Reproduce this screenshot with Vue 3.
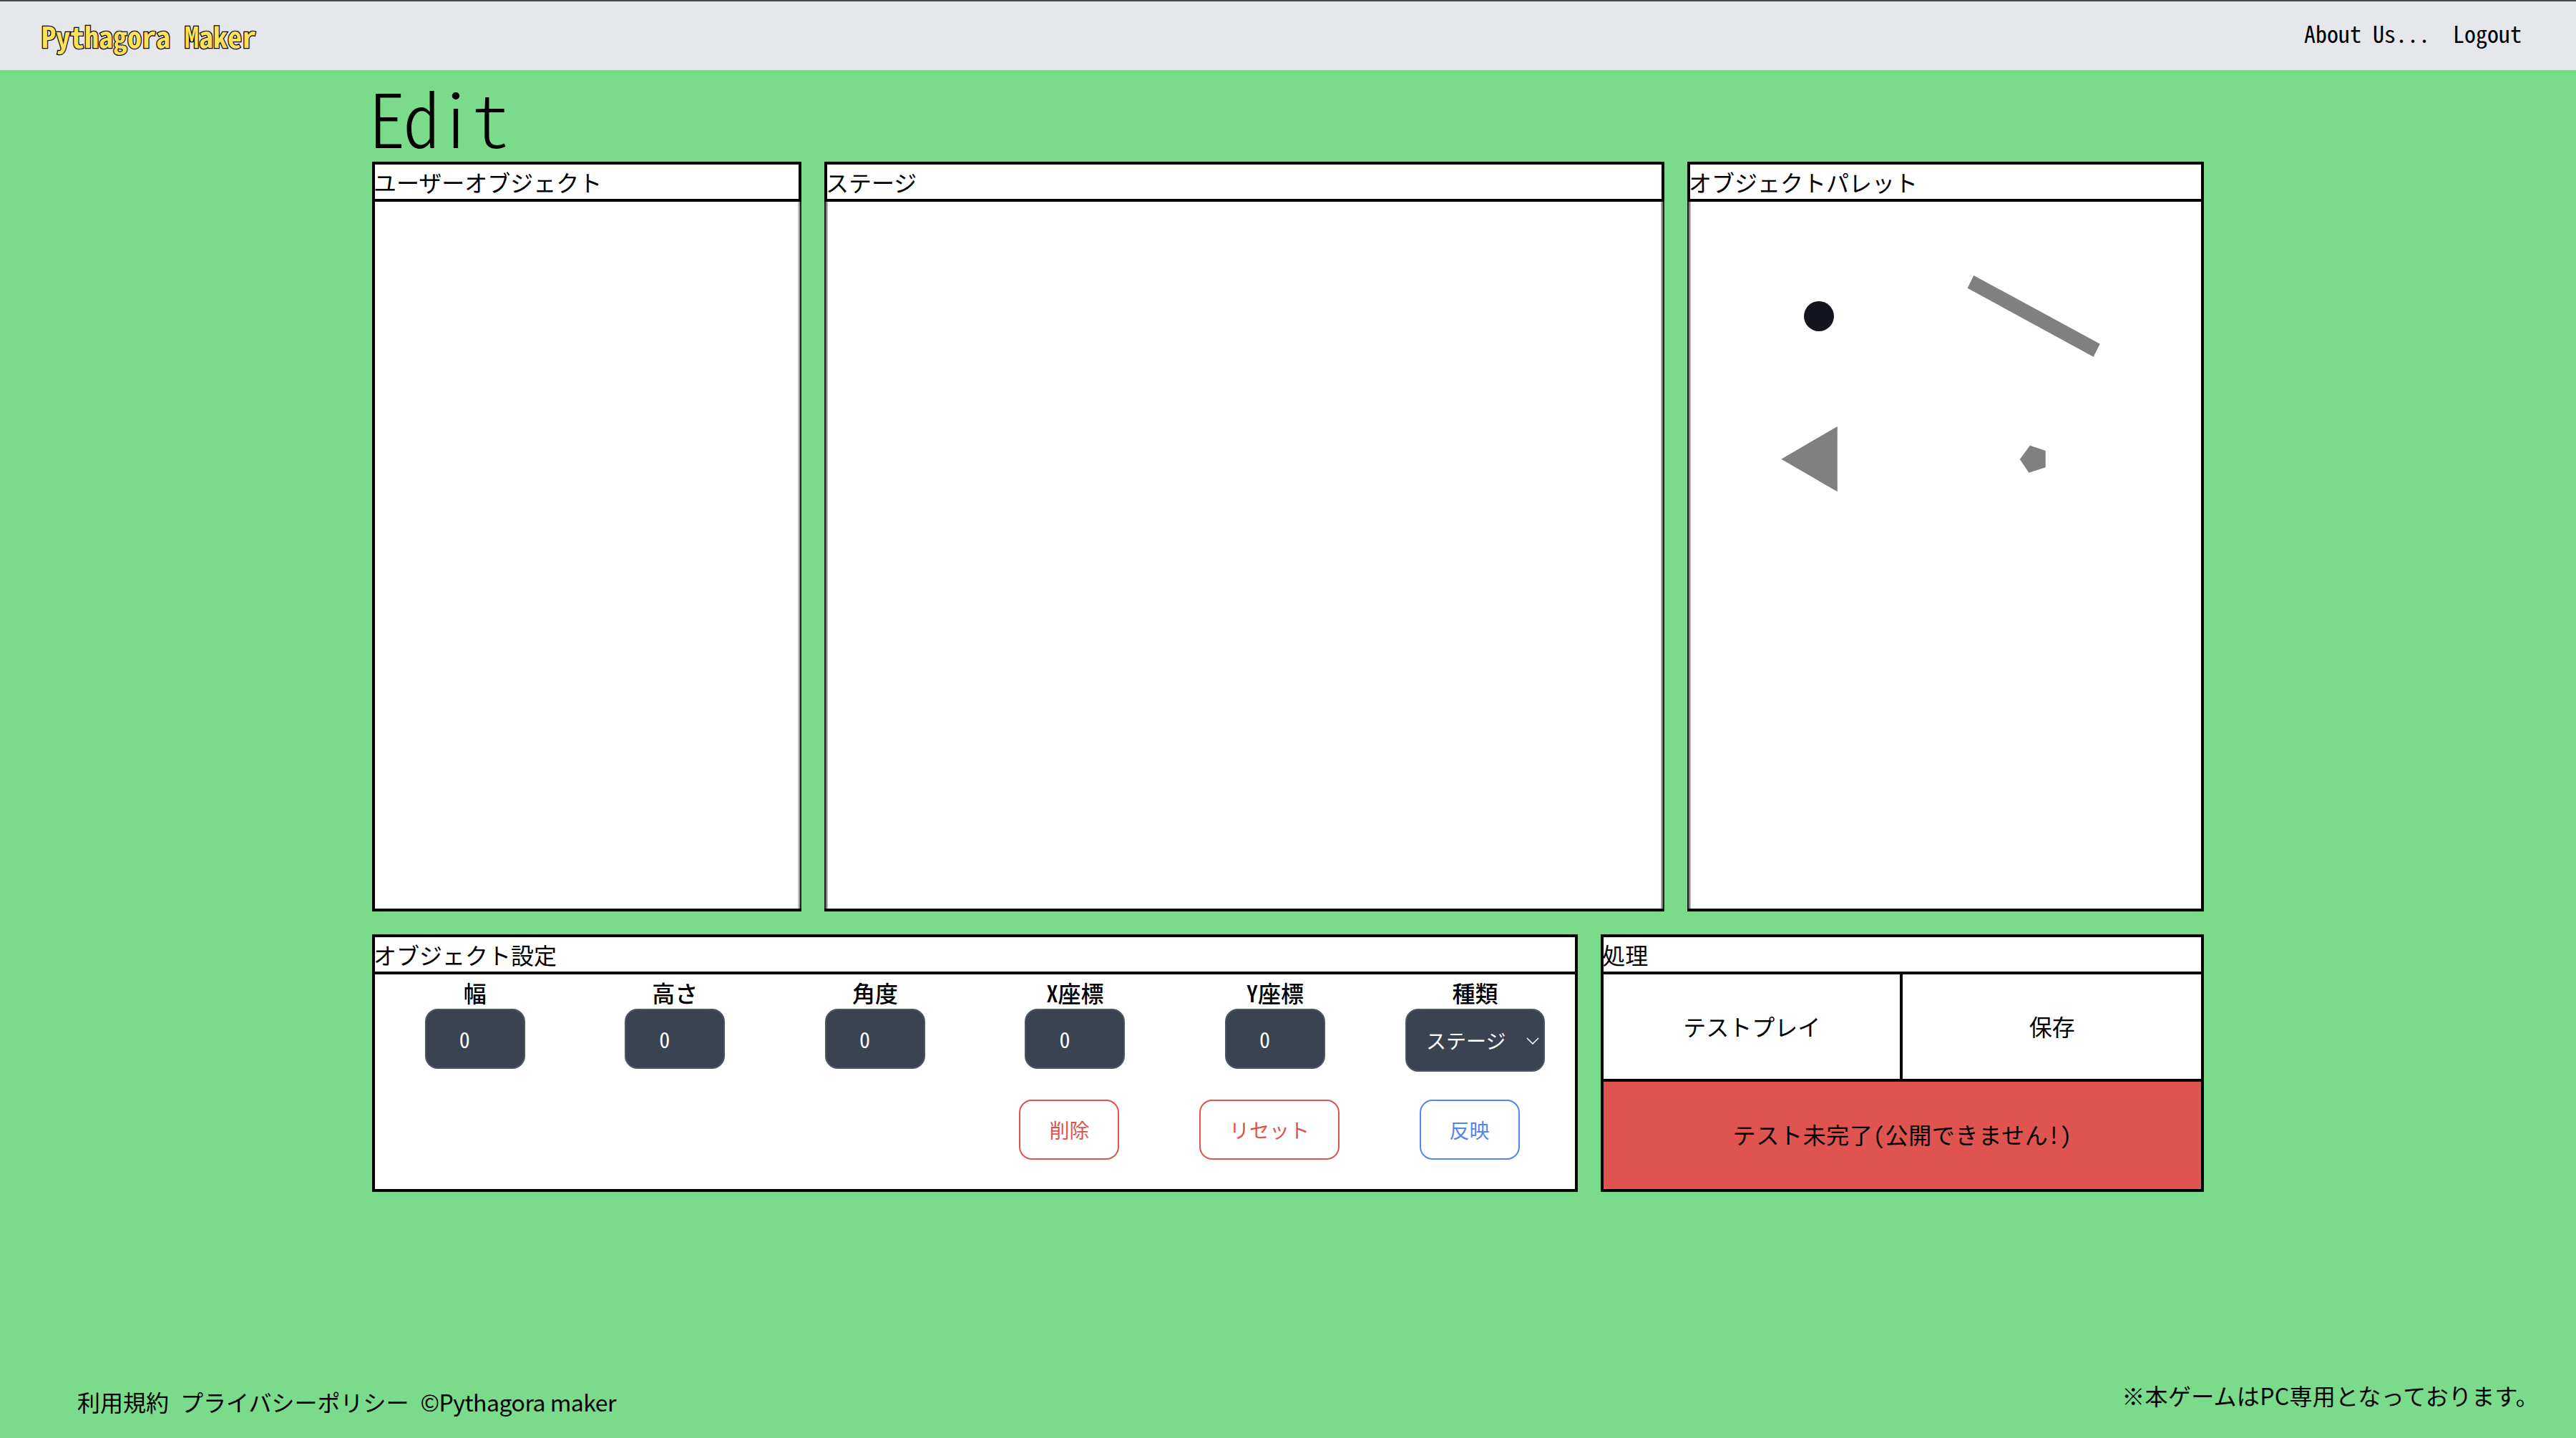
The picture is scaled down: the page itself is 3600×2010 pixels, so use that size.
<script setup>
const fields = ['幅', '高さ', '角度', 'X座標', 'Y座標']
</script>

<template>
  <div class="page">
    <nav class="nav">
      <span class="logo">Pythagora Maker</span>
      <div class="links">
        <a>About Us...</a>
        <a>Logout</a>
      </div>
    </nav>

    <main class="main">
      <h1 class="heading">Edit</h1>

      <div class="row-top">
        <section class="panel">
          <h2 class="title">ユーザーオブジェクト</h2>
          <div class="body soft-right"></div>
        </section>
        <section class="panel">
          <h2 class="title">ステージ</h2>
          <div class="body soft-left soft-right"></div>
        </section>
        <section class="panel">
          <h2 class="title">オブジェクトパレット</h2>
          <div class="body soft-left">
            <svg class="palette" viewBox="0 0 714 988" width="714" height="988">
              <circle cx="180" cy="160" r="21" fill="#15151f" />
              <polygon points="396.3,103 572.8,198.7 563.6,216.7 387.6,120.7" fill="#808080" />
              <polygon points="205.8,314 127.3,359.7 205.8,405.3" fill="#808080" />
              <polygon points="474.9,340.7 496.7,348 496.7,371.3 473.4,378.7 460.8,360" fill="#808080" />
            </svg>
          </div>
        </section>
      </div>

      <div class="row-bottom">
        <section class="panel">
          <h2 class="title">オブジェクト設定</h2>
          <div class="settings">
            <div v-for="f in fields" :key="f" class="field">
              <label class="label">{{ f }}</label>
              <input class="control num" value="0" />
            </div>
            <div class="field">
              <label class="label">種類</label>
              <div class="select-wrap">
                <select class="control sel">
                  <option>ステージ</option>
                </select>
                <svg class="chev" viewBox="0 0 18 10" width="18" height="10">
                  <path d="M1 1 L9 9 L17 1" fill="none" stroke="#fff" stroke-width="1.6" />
                </svg>
              </div>
            </div>
            <div class="action a4"><button class="btn red">削除</button></div>
            <div class="action"><button class="btn red">リセット</button></div>
            <div class="action"><button class="btn blue">反映</button></div>
          </div>
        </section>

        <section class="panel">
          <h2 class="title">処理</h2>
          <div class="process">
            <button class="cell cell-left">テストプレイ</button>
            <button class="cell">保存</button>
            <button class="cell warn">テスト未完了(公開できません！)</button>
          </div>
        </section>
      </div>
    </main>

    <footer class="footer">
      <div class="foot-left">
        <a>利用規約</a>
        <a>プライバシーポリシー</a>
        <span class="copy">©Pythagora maker</span>
      </div>
      <p class="foot-right">※本ゲームはPC専用となっております。</p>
    </footer>
  </div>
</template>

<style scoped>
.page {
  min-height: 2010px;
  display: flex;
  flex-direction: column;
  background: #7adc8a;
  color: #000;
  font-family: "Noto Sans CJK JP", "Liberation Sans", sans-serif;
  font-feature-settings: "hwid";
  font-weight: 400;
  font-size: 32px;
}
.nav {
  box-sizing: border-box;
  height: 98px;
  border-top: 2px solid #414a4f;
  background: #e5e7eb;
  display: flex;
  align-items: center;
  justify-content: space-between;
  padding: 0 76px 0 58px;
}
.logo {
  font-size: 40px;
  line-height: 56px;
  color: #ffe25a;
  -webkit-text-stroke: 2.5px #000;
  paint-order: stroke fill;
  font-weight: 700;
}
.links {
  display: flex;
  gap: 32px;
  line-height: 48px;
  padding-bottom: 8px;
}
.main {
  width: 2560px;
  margin-left: 520px;
}
.heading {
  margin: 0 0 0 -5px;
  height: 128px;
  font-size: 104px;
  line-height: 128px;
  letter-spacing: -4px;
  font-weight: 300;
}
.row-top {
  display: grid;
  grid-template-columns: 600px 1174px 722px;
  gap: 32px;
  height: 1048px;
}
.row-bottom {
  display: grid;
  grid-template-columns: 2fr 1fr;
  gap: 32px;
  height: 360px;
  margin-top: 32px;
}
.panel {
  box-sizing: border-box;
  border: 4px solid #000;
  background: #fff;
  display: flex;
  flex-direction: column;
  min-width: 0;
}
.title {
  margin: 0;
  height: 48px;
  flex: none;
  border-bottom: 4px solid #000;
  font-size: 32px;
  line-height: 48px;
  font-weight: 400;
  white-space: nowrap;
  text-indent: -2px;
}
.body {
  flex: 1;
  position: relative;
}
.soft-left::before,
.soft-right::after {
  content: "";
  position: absolute;
  top: 0;
  bottom: 0;
  width: 5px;
}
.soft-left::before {
  left: -4px;
  background: linear-gradient(to right, #222 2px, #808080 2px 3.5px, #c4c4c4 3.5px 5px);
}
.soft-right::after {
  right: -4px;
  background: linear-gradient(to left, #222 2px, #808080 2px 3.5px, #c4c4c4 3.5px 5px);
}
.palette {
  display: block;
}
.settings {
  display: grid;
  grid-template-columns: repeat(6, 1fr);
  grid-template-rows: 136px 1fr;
}
.field {
  display: flex;
  flex-direction: column;
  align-items: center;
  padding-top: 2px;
}
.label {
  flex: none;
  height: 46px;
  line-height: 46px;
  font-weight: 500;
}
.control {
  flex: none;
  box-sizing: border-box;
  height: 84px;
  border: 2px solid #4b5563;
  border-radius: 18px;
  background: #3b4252;
  color: #fff;
  font: inherit;
  font-size: 28px;
  font-feature-settings: "hwid";
  outline: none;
}
.num {
  width: 140px;
  padding: 0 0 0 46px;
  font-size: 30px;
}
.select-wrap {
  position: relative;
  flex: none;
}
.sel {
  display: block;
  width: 195px;
  height: 88px;
  padding: 0 0 0 27px;
  appearance: none;
  -webkit-appearance: none;
}
.chev {
  position: absolute;
  right: 8px;
  top: 40px;
  pointer-events: none;
}
.action {
  display: flex;
  justify-content: center;
  padding-top: 39px;
}
.a4 {
  grid-column-start: 4;
}
.btn {
  box-sizing: border-box;
  height: 84px;
  margin-right: 16px;
  padding: 0 40px;
  border: 2px solid;
  border-radius: 18px;
  background: #fff;
  font: inherit;
  font-size: 28px;
  white-space: nowrap;
}
.red {
  color: #e0524e;
  border-color: #e0524e;
}
.blue {
  color: #4f86f0;
  border-color: #4f86f0;
}
.process {
  flex: 1;
  display: grid;
  grid-template-columns: 418px 1fr;
  grid-template-rows: 146px 1fr;
}
.cell {
  border: 0;
  background: #fff;
  font: inherit;
  color: #000;
  padding: 0 0 2px;
}
.cell-left {
  border-right: 4px solid #000;
}
.warn {
  grid-column: 1 / 3;
  background: #df544f;
  border-top: 4px solid #000;
  padding: 0 0 4px;
  letter-spacing: 0.7px;
}
.footer {
  margin-top: auto;
  display: flex;
  justify-content: space-between;
  font-feature-settings: normal;
  font-weight: 400;
  padding: 0 52px 0 108px;
}
.foot-left {
  display: flex;
  gap: 16px;
  padding-top: 9px;
  padding-bottom: 17px;
  line-height: 48px;
}
.copy {
  letter-spacing: -0.5px;
}
.foot-right {
  margin: 0 0 36px;
  line-height: 48px;
  letter-spacing: 0.3px;
}
</style>

<style>
html, body {
  margin: 0;
  background: #7adc8a;
}
</style>
